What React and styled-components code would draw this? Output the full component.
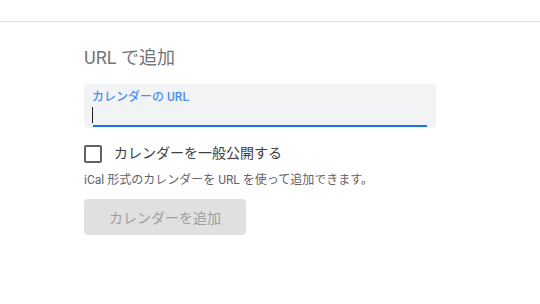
import React from "react";
import styled, { createGlobalStyle } from "styled-components";

const GlobalStyle = createGlobalStyle`
  body {
    margin: 0;
    background: #fff;
    font-family: Roboto, "Noto Sans CJK JP", sans-serif;
  }
`;

export default function App() {
  return (
    <Page>
      <GlobalStyle />
      <TopBar />
      <Section>
        <Title>URL で追加</Title>
        <Field>
          <FieldLabel>カレンダーの URL</FieldLabel>
          <Caret />
          <Underline />
        </Field>
        <CheckRow>
          <Box />
          <CheckLabel>カレンダーを一般公開する</CheckLabel>
        </CheckRow>
        <Help>iCal 形式のカレンダーを URL を使って追加できます。</Help>
        <AddButton disabled>カレンダーを追加</AddButton>
      </Section>
    </Page>
  );
}

const Page = styled.div`
  width: 540px;
  height: 304px;
  background: #fff;
  overflow: hidden;
`;

const TopBar = styled.div`
  height: 21px;
  border-bottom: 1px solid #dadce0;
`;

const Section = styled.div`
  padding: 23px 0 0 84px;
  display: flex;
  flex-direction: column;
  align-items: flex-start;
`;

const Title = styled.div`
  font-size: 18px;
  line-height: 26px;
  color: #70757a;
`;

const Field = styled.div`
  position: relative;
  margin-top: 13px;
  width: 352px;
  height: 44px;
  background: #f1f3f4;
  border-radius: 4px;
  box-sizing: border-box;
  padding: 5px 8px 0;
`;

const FieldLabel = styled.div`
  font-size: 12px;
  line-height: 16px;
  font-weight: 500;
  color: #4d8ff0;
`;

const Caret = styled.div`
  width: 1px;
  height: 16px;
  margin-top: 2px;
  background: #202124;
`;

const Underline = styled.div`
  position: absolute;
  left: 9px;
  right: 9px;
  bottom: 1px;
  height: 2px;
  background: #1a73e8;
`;

const CheckRow = styled.div`
  display: flex;
  align-items: center;
  gap: 12px;
  margin-top: 17px;
`;

const Box = styled.div`
  width: 18px;
  height: 18px;
  box-sizing: border-box;
  border: 2px solid #5f6368;
  border-radius: 2px;
`;

const CheckLabel = styled.div`
  font-size: 14px;
  line-height: 20px;
  color: #3c4043;
  margin-top: -3px;
`;

const Help = styled.div`
  margin-top: 9px;
  font-size: 12px;
  line-height: 16px;
  color: #5f6368;
`;

const AddButton = styled.button`
  margin-top: 11px;
  width: 162px;
  height: 36px;
  border: none;
  border-radius: 4px;
  background: #e0e0e0;
  color: #9e9e9e;
  font-family: Roboto, "Noto Sans CJK JP", sans-serif;
  font-size: 14px;
  padding: 0;
`;
